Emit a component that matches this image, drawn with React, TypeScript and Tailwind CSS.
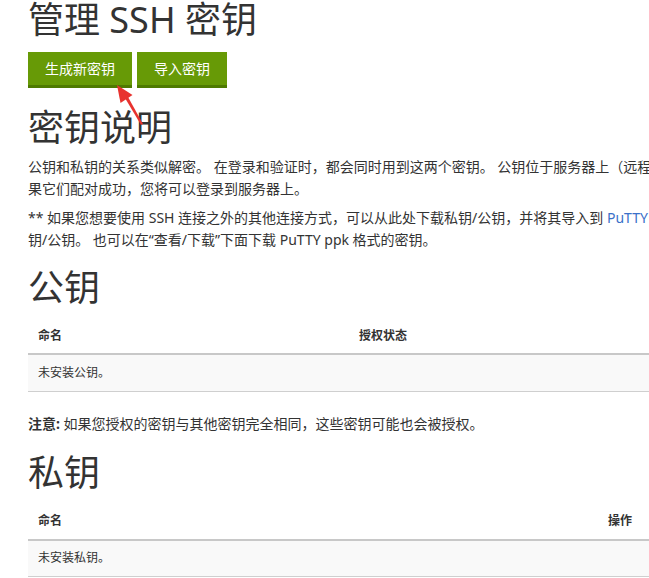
import React from 'react';

const FONT = { fontFamily: '"Segoe UI", "Noto Sans", "Noto Sans CJK SC", sans-serif' };

function GreenButton({ children }: { children: React.ReactNode }) {
  return (
    <button
      type="button"
      className="h-[36px] px-[17px] bg-[#679a06] border-b-[3px] border-[#4e7a00] text-white text-[14px] leading-[33px]"
    >
      {children}
    </button>
  );
}

function KeyTable({
  headers,
  firstWidth,
  empty,
}: {
  headers: [string, string];
  firstWidth: string;
  empty: string;
}) {
  return (
    <table className="w-[880px] table-fixed border-collapse text-[12px] text-[#333]">
      <colgroup>
        <col className={firstWidth} />
        <col />
      </colgroup>
      <thead>
        <tr className="border-b-2 border-[#c8c8c8]">
          <th className="text-left font-bold px-[10px] h-[36px] align-middle">{headers[0]}</th>
          <th className="text-left font-bold px-[10px] h-[36px] align-middle">{headers[1]}</th>
        </tr>
      </thead>
      <tbody>
        <tr className="bg-[#f9f9f9] border-b border-[#cfcfcf]">
          <td colSpan={2} className="px-[10px] h-[37px] align-middle">
            {empty}
          </td>
        </tr>
      </tbody>
    </table>
  );
}

export default function App() {
  return (
    <div className="relative w-[649px] h-[578px] overflow-hidden bg-white text-[#333]" style={FONT}>
      <div className="w-[900px] pl-[28px]">
        {/* Page title */}
        <h1 className="text-[36px] leading-[40px] font-normal text-[#333]">管理 SSH 密钥</h1>

        <div className="flex gap-[5px] mt-[12px]">
          <GreenButton>生成新密钥</GreenButton>
          <GreenButton>导入密钥</GreenButton>
        </div>

        {/* Explanation */}
        <h2 className="text-[36px] leading-[40px] font-normal mt-[20px]">密钥说明</h2>
        <p className="text-[14px] leading-[22px] mt-[8px] whitespace-nowrap">
          公钥和私钥的关系类似解密。 在登录和验证时，都会同时用到这两个密钥。 公钥位于服务器上（远程主机），私钥位于您的计算机上。如
          <br />
          果它们配对成功，您将可以登录到服务器上。
        </p>
        <p className="text-[14px] leading-[22px] mt-[7px] whitespace-nowrap">
          ** 如果您想要使用 SSH 连接之外的其他连接方式，可以从此处下载私钥/公钥，并将其导入到{' '}
          <a className="text-[#3a70c9]">PuTTY</a> 等其他客户端中，以使用私
          <br />
          钥/公钥。 也可以在“查看/下载”下面下载 PuTTY ppk 格式的密钥。
        </p>

        {/* Public keys */}
        <h2 className="text-[36px] leading-[40px] font-normal mt-[17px] mb-[10px]">公钥</h2>
        <KeyTable headers={['命名', '授权状态']} firstWidth="w-[321px]" empty="未安装公钥。" />

        <p className="text-[14px] leading-[22px] mt-[21px]">
          <b>注意:</b> 如果您授权的密钥与其他密钥完全相同，这些密钥可能也会被授权。
        </p>

        {/* Private keys */}
        <h2 className="text-[36px] leading-[40px] font-normal mt-[18px] mb-[11px]">私钥</h2>
        <KeyTable headers={['命名', '操作']} firstWidth="w-[570px]" empty="未安装私钥。" />
      </div>

      {/* Annotation arrow */}
      <svg
        className="absolute left-0 top-0 w-[160px] h-[130px] pointer-events-none"
        viewBox="0 0 160 130"
      >
        <path d="M125 98 L128 97 L143 124 L141 125 Z" fill="#e8332f" />
        <path d="M117 85 L132.5 95 L120.5 103 Z" fill="#e8332f" />
      </svg>
    </div>
  );
}
